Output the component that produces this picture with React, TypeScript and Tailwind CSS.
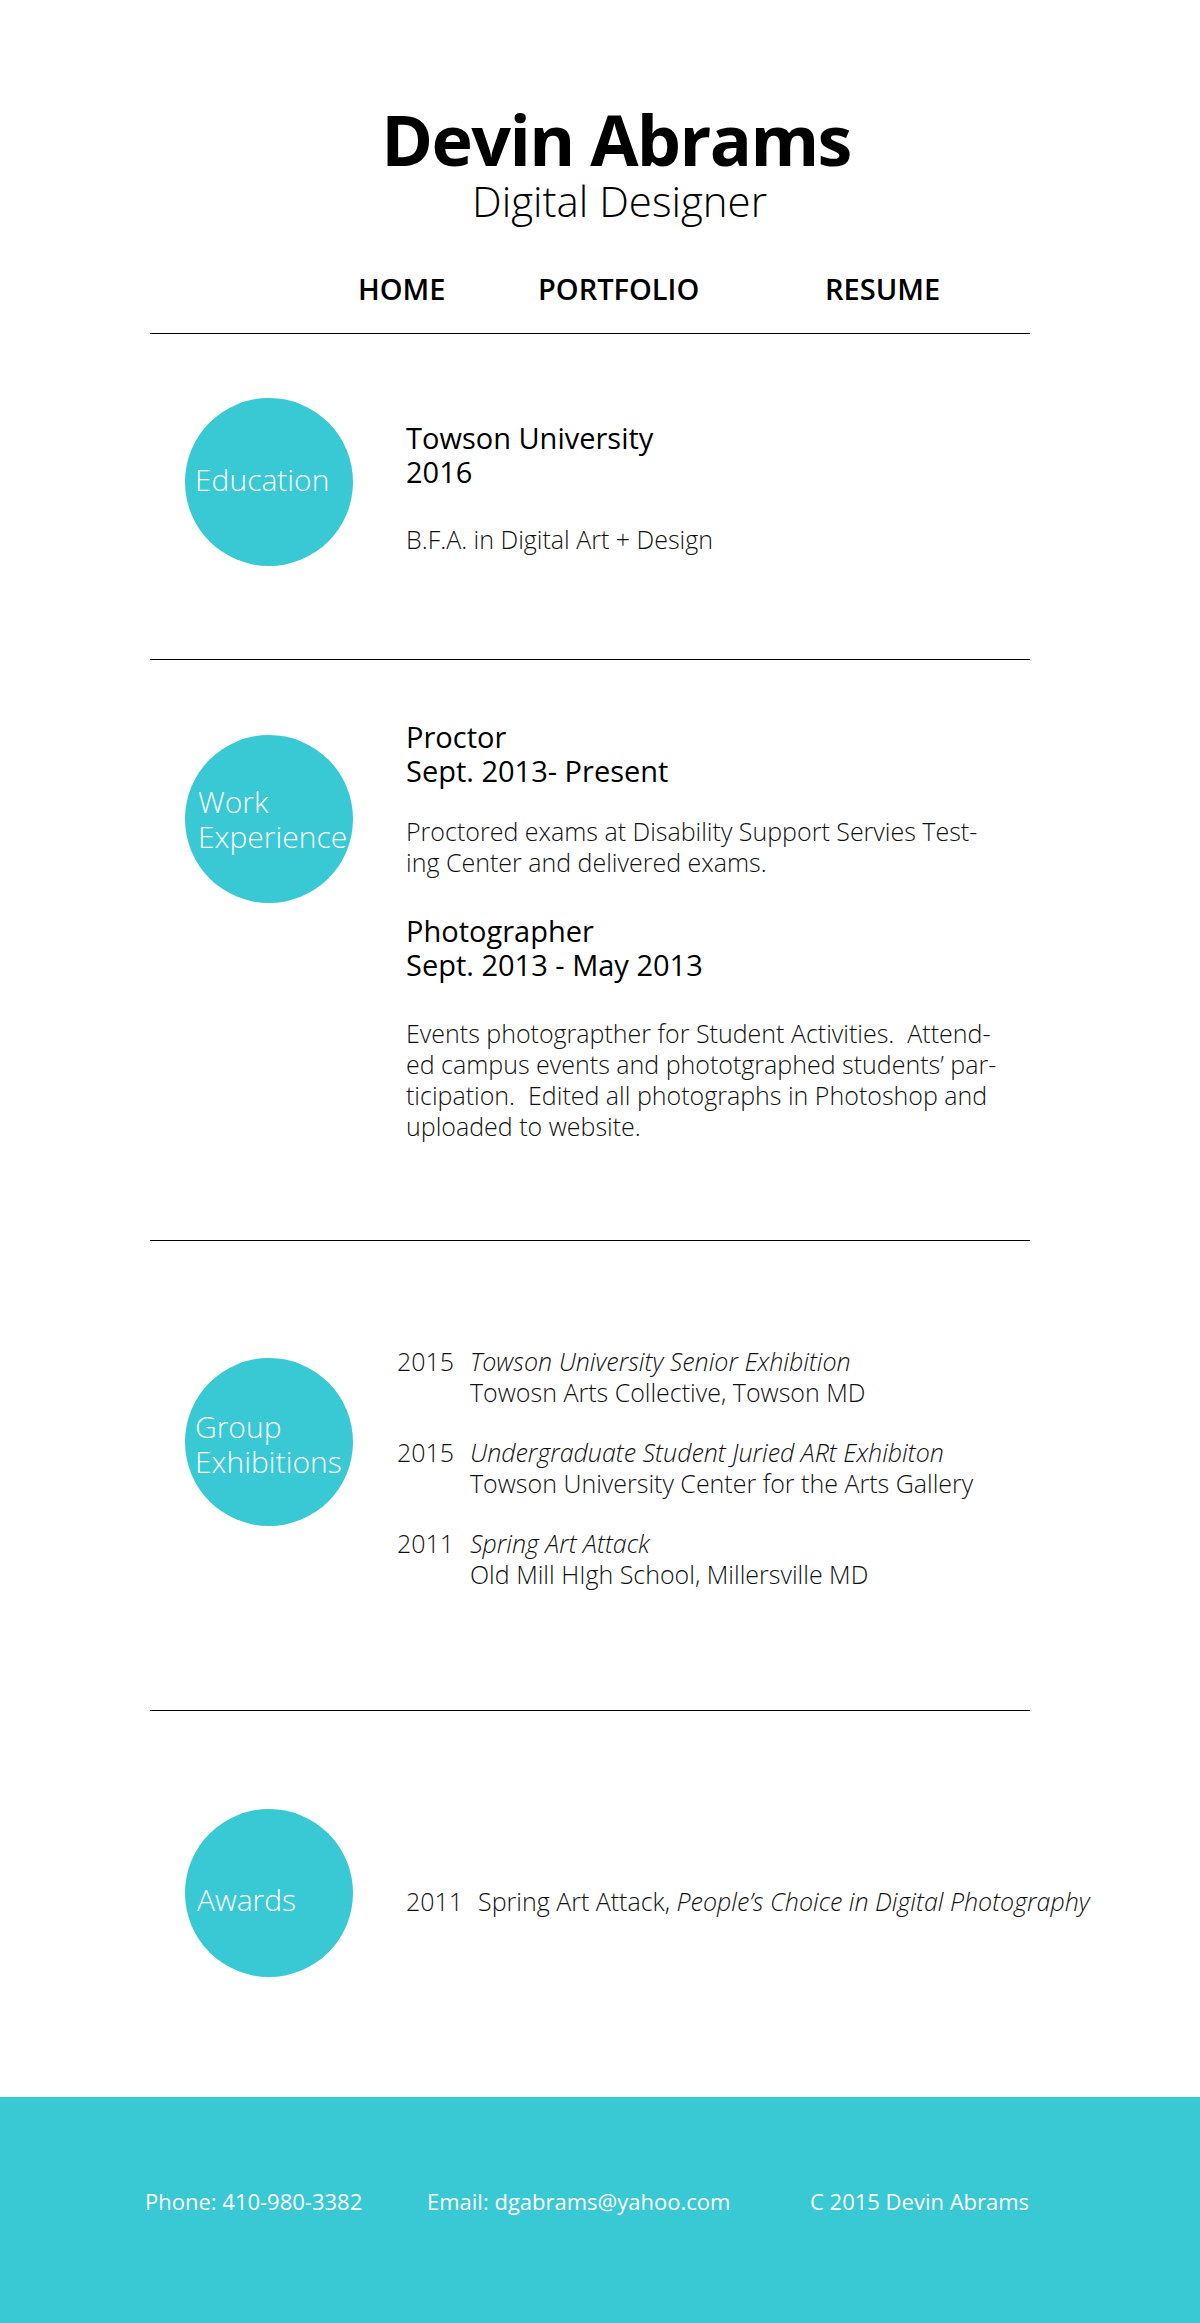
import React from "react";

const Circle = ({ children, className = "" }: { children: React.ReactNode; className?: string }) => (
  <div
    className={
      "w-[168px] h-[168px] shrink-0 rounded-full bg-[#38c9d4] flex flex-col justify-center pl-[10px] text-white text-[30px] font-light leading-[35px] " +
      className
    }
  >
    {children}
  </div>
);

const Divider = () => <div className="h-px bg-black" />;

export default function App() {
  return (
    <div className="w-[1200px] bg-white text-black font-['Open_Sans',sans-serif]">
      <header className="pt-[104px]">
        <h1 className="pl-[32px] text-center text-[70px] font-bold leading-[70px] tracking-[-1.6px]">
          Devin Abrams
        </h1>
        <p className="mt-[5px] pl-[39px] text-center text-[42px] font-light leading-[43px]">
          Digital Designer
        </p>
        <nav className="mt-[52px] flex pl-[358px] text-[29px] font-semibold leading-[29px]">
          <span className="w-[180px]">HOME</span>
          <span className="w-[287px]">PORTFOLIO</span>
          <span>RESUME</span>
        </nav>
      </header>

      <main className="ml-[150px] w-[880px] mt-[30px]">
        <Divider />

        {/* Education */}
        <section className="flex items-start pb-[93px]">
          <div className="ml-[35px] mt-[64px]">
            <Circle className="pb-[6px]">Education</Circle>
          </div>
          <div className="ml-[53px] mt-[87px] whitespace-nowrap">
            <p className="text-[29px] leading-[34px]">Towson University</p>
            <p className="text-[29px] leading-[34px]">2016</p>
            <p className="mt-[35px] text-[25px] font-light leading-[30px] text-[#111]">
              B.F.A. in Digital Art + Design
            </p>
          </div>
        </section>

        <Divider />

        {/* Work */}
        <section className="flex items-start pb-[98px]">
          <div className="ml-[35px] mt-[75px]">
            <Circle className="pl-[13px]">
              <span>Work</span>
              <span>Experience</span>
            </Circle>
          </div>
          <div className="ml-[53px] mt-[60px] whitespace-nowrap">
            <p className="text-[29px] leading-[34px]">Proctor</p>
            <p className="text-[29px] leading-[34px]">Sept. 2013- Present</p>
            <p className="mt-[28px] text-[25px] font-light leading-[31px] text-[#111]">
              Proctored exams at Disability Support Servies Test-
              <br />
              ing Center and delivered exams.
            </p>
            <p className="mt-[36px] text-[29px] leading-[34px]">Photographer</p>
            <p className="text-[29px] leading-[34px]">Sept. 2013 - May 2013</p>
            <p className="mt-[36px] text-[25px] font-light leading-[31px] text-[#111]">
              Events photograpther for Student Activities.&nbsp; Attend-
              <br />
              ed campus events and phototgraphed students’ par-
              <br />
              ticipation.&nbsp; Edited all photographs in Photoshop and
              <br />
              uploaded to website.
            </p>
          </div>
        </section>

        <Divider />

        {/* Group Exhibitions */}
        <section className="flex items-start pb-[120px]">
          <div className="ml-[35px] mt-[117px]">
            <Circle className="pl-[9px] pt-[4px]">
              <span>Group</span>
              <span>Exhibitions</span>
            </Circle>
          </div>
          <div className="ml-[44px] mt-[105px] flex flex-col gap-[29px] whitespace-nowrap text-[25px] font-light leading-[31px] text-[#111]">
            {[
              ["2015", "Towson University Senior Exhibition", "Towosn Arts Collective, Towson MD"],
              ["2015", "Undergraduate Student Juried ARt Exhibiton", "Towson University Center for the Arts Gallery"],
              ["2011", "Spring Art Attack", "Old Mill HIgh School, Millersville MD"],
            ].map(([y, t, l], i) => (
              <div key={i} className="flex">
                <span className="w-[73px] shrink-0">{y}</span>
                <div>
                  <p className="italic">{t}</p>
                  <p>{l}</p>
                </div>
              </div>
            ))}
          </div>
        </section>

        <Divider />

        {/* Awards */}
        <section className="flex items-start pb-[120px]">
          <div className="ml-[35px] mt-[98px]">
            <Circle className="pl-[12px] pt-[13px]">Awards</Circle>
          </div>
          <div className="ml-[53px] mt-[175px] flex whitespace-nowrap text-[25px] font-light leading-[31px] text-[#111]">
            <span className="w-[72px] shrink-0">2011</span>
            <span>
              Spring Art Attack, <span className="italic">People’s Choice in Digital Photography</span>
            </span>
          </div>
        </section>
      </main>

      <footer className="h-[227px] bg-[#38c9d4] flex items-center pb-[20px] pl-[145px] text-white text-[22px] leading-[30px] whitespace-nowrap">
        <span className="w-[282px] shrink-0">Phone: 410-980-3382</span>
        <span className="w-[383px] shrink-0">Email: dgabrams@yahoo.com</span>
        <span>C 2015 Devin Abrams</span>
      </footer>
    </div>
  );
}
